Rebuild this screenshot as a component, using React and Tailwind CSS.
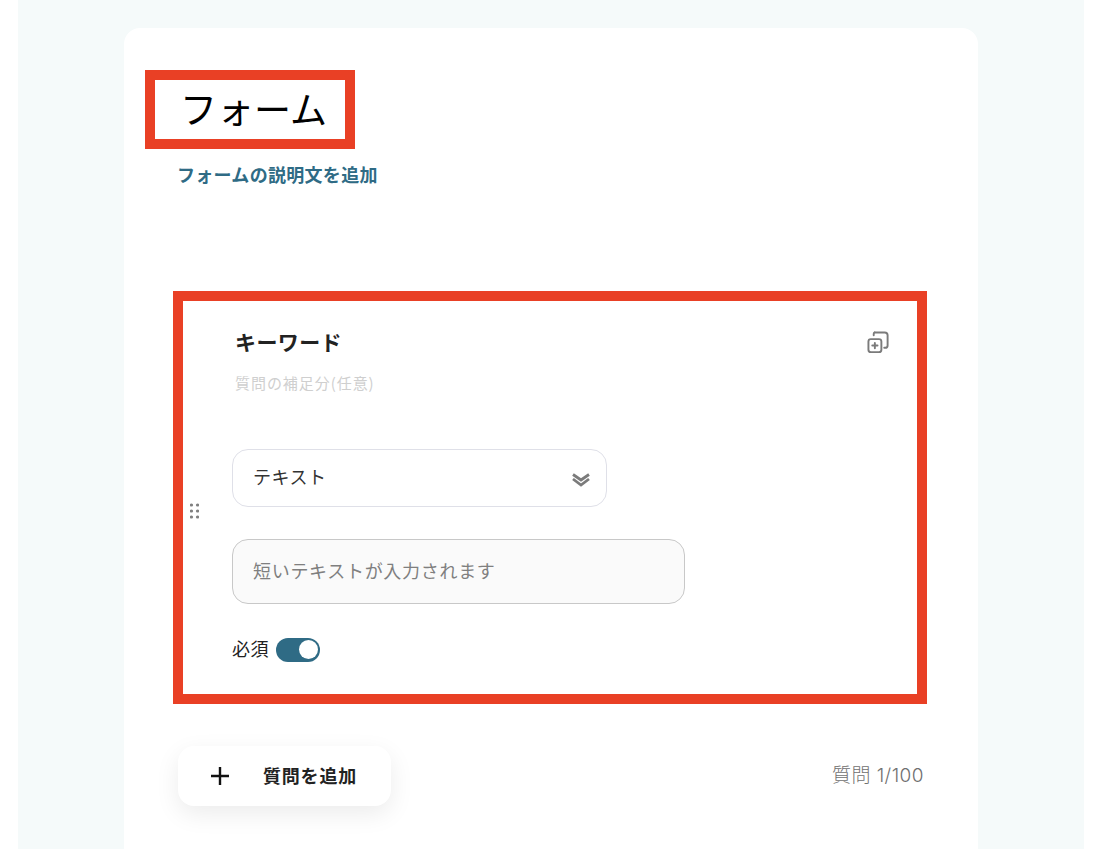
const font = { fontFamily: '"Noto Sans CJK JP", "Noto Sans", sans-serif' };

function CopyPlus() {
  return (
    <svg width="23" height="23" viewBox="0 0 24 24" fill="none" stroke="#7b7b7b" strokeWidth="2" strokeLinecap="round" strokeLinejoin="round">
      <rect x="1.5" y="8.5" width="13.5" height="13.5" rx="2.5" />
      <path d="M8 1.5h10.5a3 3 0 0 1 3 3V15a2.500 2.500 0 0 1-2.500 2.500h-1" />
      <path d="M8 1.500a1.500 1.500 0 0 0-1 1.500v1.500" />
      <path d="M8.200 12.500v5.500M5.500 15.200h5.500" />
    </svg>
  );
}

function DoubleChevron() {
  return (
    <svg width="18" height="15" viewBox="0 0 18 15" fill="none" stroke="#7b7b7b" strokeWidth="2.800" className="mt-[2px]">
      <path d="M1 2.500l8 5.500 8-5.500" />
      <path d="M1 7l8 6 8-6" />
    </svg>
  );
}

function Grip() {
  return (
    <svg width="9" height="16" viewBox="0 0 9 16" fill="#808080">
      {[2, 8, 14].map((y) => (
        <g key={y}>
          <circle cx="1.500" cy={y} r="1.600" />
          <circle cx="7.500" cy={y} r="1.600" />
        </g>
      ))}
    </svg>
  );
}

export default function App() {
  return (
    <div className="h-[849px] overflow-hidden bg-white px-[18px] pr-[22px]" style={font}>
      <div className="h-full bg-[#f5fafa] pt-[28px] pl-[106px] pr-[106px]">
        <div className="h-[821px] rounded-t-2xl bg-white pt-[42px]">
          <div className="ml-[21px] flex h-[79px] w-[210px] items-center border-[10px] border-[#e94025] pb-[2px] pl-[28px] text-[37px] leading-none text-black">
            <span className="ml-[-3px]">フォーム</span>
          </div>
          <p className="ml-[53px] mt-[12px] text-[18px] font-bold leading-[26px] tracking-[0.3px] text-[#2f6b85]">
            フォームの説明文を追加
          </p>
          <section className="relative ml-[49px] mt-[104px] h-[413px] w-[754px] border-[10px] border-[#e94025]">
            <div className="flex flex-col pl-[49px]">
              <div className="flex items-start justify-between pl-[3px] pr-[27px] pt-[26px]">
                <h2 className="text-[21px] font-bold leading-[28px] tracking-[0.4px] text-[#222222]">キーワード</h2>
                <div className="mt-[4px]">
                  <CopyPlus />
                </div>
              </div>
              <p className="ml-[3px] mt-[17px] text-[15px] leading-[22px] tracking-[0.95px] text-[#cfcfcf]">
                質問の補足分(任意)
              </p>
              <div className="mt-[55px] flex h-[58px] w-[375px] items-center justify-between rounded-2xl border border-[#dfe0e8] bg-white pl-[20px] pr-[16px] text-[18px] tracking-[0.5px] text-[#333333]">
                <span className="mb-[4px]">テキスト</span>
                <DoubleChevron />
              </div>
              <div className="mt-[32px] flex h-[65px] w-[453px] items-center rounded-2xl border border-[#c8c8c8] bg-[#fafafa] pl-[20px] text-[18px] tracking-[0.7px] text-[#7f7f7f]">
                <span className="mb-[2px]">短いテキストが入力されます</span>
              </div>
              <div className="mt-[32px] flex items-center gap-[7px] text-[18px] leading-[24px] tracking-[0.5px] text-[#222222]">
                <span className="mb-[3px]">必須</span>
                <div className="flex h-[24px] w-[44px] items-center justify-end rounded-full bg-[#2f6b85] pr-[2px]">
                  <div className="h-[19px] w-[19px] rounded-full bg-white" />
                </div>
              </div>
            </div>
            <div className="absolute left-[7px] top-[202px]">
              <Grip />
            </div>
          </section>
          <div className="ml-[54px] mr-[54px] mt-[42px] flex items-center justify-between">
            <button className="flex h-[60px] w-[213px] items-center rounded-2xl bg-white pl-[33px] text-[18px] font-bold text-[#222222] shadow-[0_8px_24px_rgba(0,0,0,0.08)]">
              <svg width="18" height="18" viewBox="0 0 18 18" stroke="#111111" strokeWidth="2.400">
                <path d="M9 0v18M0 9h18" />
              </svg>
              <span className="mb-[2px] ml-[34px] tracking-[0.8px]">質問を追加</span>
            </button>
            <span className="text-[19px] tracking-[0.45px] text-[#707070]" style={{ fontFamily: 'Inter, "Noto Sans CJK JP", sans-serif', fontWeight: 300 }}>質問 1/100</span>
          </div>
        </div>
      </div>
    </div>
  );
}
